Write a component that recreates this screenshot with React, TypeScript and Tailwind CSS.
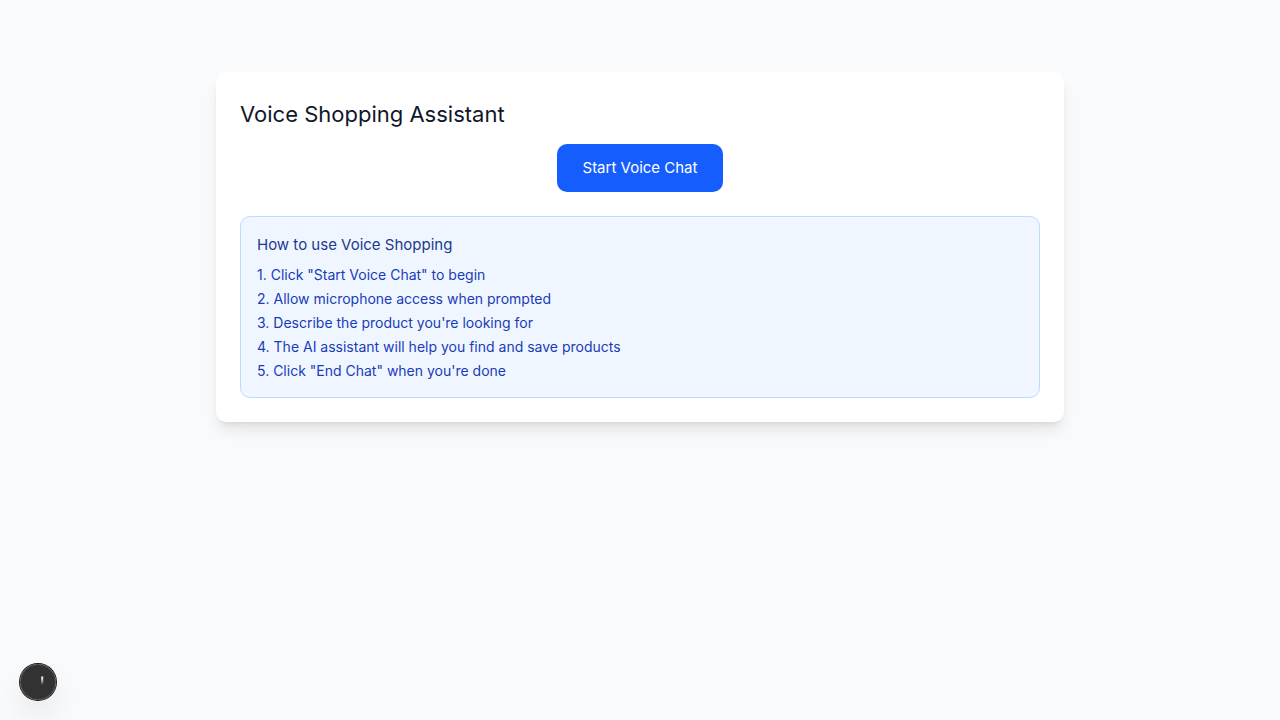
const steps = [
  'Click "Start Voice Chat" to begin',
  'Allow microphone access when prompted',
  "Describe the product you're looking for",
  'The AI assistant will help you find and save products',
  'Click "End Chat" when you\'re done',
];

function Instructions() {
  return (
    <section className="mt-6 rounded-[10px] border border-blue-200 bg-blue-50 p-4">
      <h2 className="mb-2 text-[15px] leading-6 text-blue-900">How to use Voice Shopping</h2>
      <ol className="space-y-1 text-sm text-blue-800">
        {steps.map((step, i) => (
          <li key={step}>
            {i + 1}. {step}
          </li>
        ))}
      </ol>
    </section>
  );
}

function DevToolsButton() {
  return (
    <button
      type="button"
      aria-label="Open developer tools"
      className="fixed bottom-5 left-5 flex size-9 items-center justify-center rounded-full bg-black/80 shadow-[0_0_0_1px_#171717,inset_0_0_0_1px_rgba(255,255,255,0.14),0_16px_32px_-8px_rgba(0,0,0,0.24)]"
    >
      <svg viewBox="0 0 36 36" className="size-9" aria-hidden="true">
        <defs>
          <linearGradient id="stem" x1="0" y1="0" x2="0" y2="1">
            <stop offset="0" stopColor="white" />
            <stop offset="0.4" stopColor="white" stopOpacity="0.75" />
            <stop offset="1" stopColor="white" stopOpacity="0" />
          </linearGradient>
        </defs>
        <rect x="21.2" y="12.5" width="2" height="8.5" fill="url(#stem)" />
      </svg>
    </button>
  );
}

export default function App() {
  return (
    <div className="min-h-screen bg-gray-50 px-4 py-18 font-['Inter',sans-serif] text-slate-900">
      <main className="mx-auto max-w-212 rounded-[10px] bg-white p-6 shadow-lg">
        <h1 className="mb-3 text-[22px] leading-9">Voice Shopping Assistant</h1>
        <div className="flex justify-center">
          <button
            type="button"
            className="rounded-[10px] bg-blue-600 px-[26px] py-3 text-[15px] leading-6 text-white"
          >
            Start Voice Chat
          </button>
        </div>
        <Instructions />
      </main>
      <DevToolsButton />
    </div>
  );
}
